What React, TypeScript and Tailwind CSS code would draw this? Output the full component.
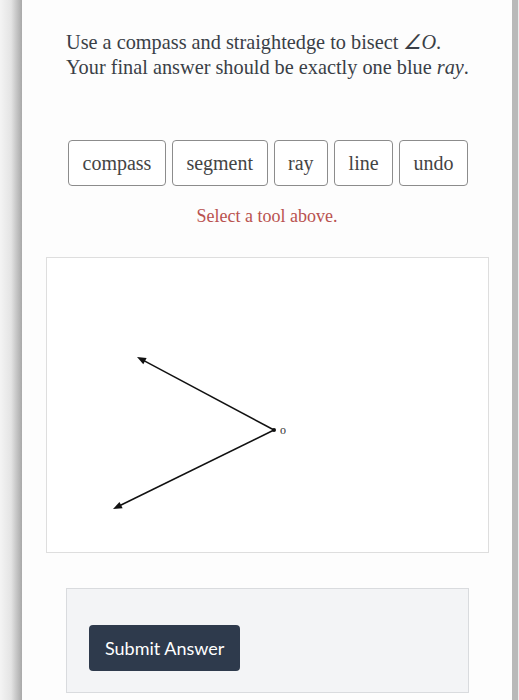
import React from 'react'

const tools = ['compass', 'segment', 'ray', 'line', 'undo']

const serif = "font-['Liberation_Serif',Georgia,serif]"

const AngleCanvas = () => (
  <svg width="441" height="294" viewBox="0 0 441 294" className="block">
    <line x1="227" y1="172" x2="95" y2="101.6" stroke="#111" strokeWidth="1.5" />
    <line x1="227" y1="172" x2="71" y2="248.5" stroke="#111" strokeWidth="1.5" />
    <polygon points="90,99 99.6,100.1 96.3,106.3" fill="#111" />
    <polygon points="66,251 75.6,250.2 72.5,243.9" fill="#111" />
    <circle cx="227" cy="172" r="2" fill="#111" />
    <text
      x="233"
      y="176"
      fontSize="12"
      fill="#333"
      fontFamily="'Liberation Serif', serif"
    >
      o
    </text>
  </svg>
)

const App = () => {
  return (
    <div className="flex h-[700px] w-[519px] overflow-hidden bg-white">
      <div className="w-[22px] shrink-0 bg-linear-to-r from-[#f4f4f4] via-[#e4e4e4] to-[#a9a9a9]" />

      <main className="flex flex-1 flex-col bg-[#fdfdfd]">
        <p className={`${serif} ml-[44px] pt-[30px] text-[20.3px] leading-[25px] text-[#3a3f47]`}>
          Use a compass and straightedge to bisect <span className="italic">∠O</span>.
          <br />
          Your final answer should be exactly one blue <span className="italic">ray</span>.
        </p>

        <div className="ml-[46px] mt-[60px] flex gap-[6px]">
          {tools.map((t) => (
            <button
              key={t}
              className={`${serif} h-[46px] rounded-[4px] border border-[#8c8c8c] bg-white px-[13.5px] text-[20px] text-[#444]`}
            >
              {t}
            </button>
          ))}
        </div>

        <p className={`${serif} mt-[18px] w-[490px] text-center text-[18px] leading-[24px] text-[#b9524f]`}>
          Select a tool above.
        </p>

        <div className="ml-[24px] mt-[29px] w-[443px] border border-[#dedede] bg-white">
          <AngleCanvas />
        </div>

        <div className="ml-[44px] mt-[35px] h-[105px] w-[403px] border border-[#d9dbde] bg-[#f3f4f6] pl-[22px] pt-[36px]">
          <button className="h-[46px] rounded-[4px] bg-[#2e3a4c] px-[16px] font-['Lato',sans-serif] text-[18px] text-white">
            Submit Answer
          </button>
        </div>
      </main>

      <div className="w-[6px] shrink-0 bg-[#b9b9b9]" />
      <div className="w-px shrink-0 bg-[#ececec]" />
    </div>
  )
}

export default App
